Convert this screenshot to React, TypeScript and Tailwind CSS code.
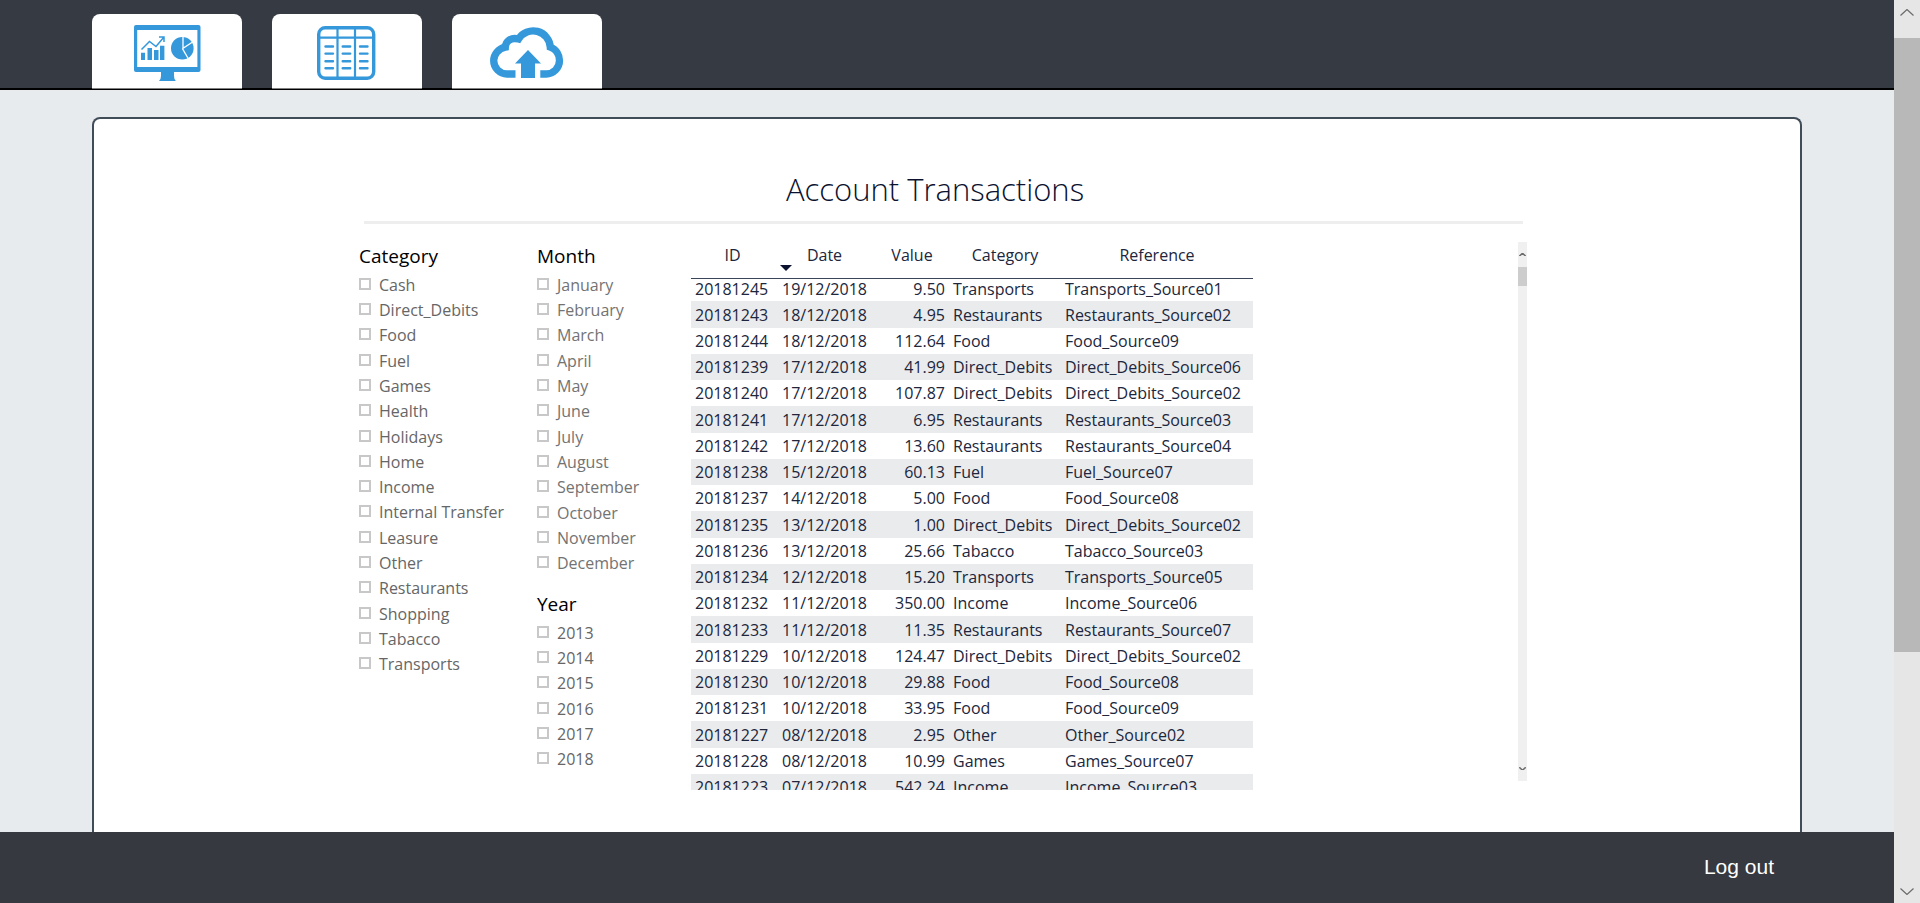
import React from 'react';

const categories = [
    'Cash', 'Direct_Debits', 'Food', 'Fuel', 'Games', 'Health', 'Holidays', 'Home', 'Income',
    'Internal Transfer', 'Leasure', 'Other', 'Restaurants', 'Shopping', 'Tabacco', 'Transports',
];

const months = [
    'January', 'February', 'March', 'April', 'May', 'June', 'July', 'August', 'September',
    'October', 'November', 'December',
];

const years = ['2013', '2014', '2015', '2016', '2017', '2018'];

const transactions = [
    ['20181245', '19/12/2018', '9.50', 'Transports', 'Transports_Source01'],
    ['20181243', '18/12/2018', '4.95', 'Restaurants', 'Restaurants_Source02'],
    ['20181244', '18/12/2018', '112.64', 'Food', 'Food_Source09'],
    ['20181239', '17/12/2018', '41.99', 'Direct_Debits', 'Direct_Debits_Source06'],
    ['20181240', '17/12/2018', '107.87', 'Direct_Debits', 'Direct_Debits_Source02'],
    ['20181241', '17/12/2018', '6.95', 'Restaurants', 'Restaurants_Source03'],
    ['20181242', '17/12/2018', '13.60', 'Restaurants', 'Restaurants_Source04'],
    ['20181238', '15/12/2018', '60.13', 'Fuel', 'Fuel_Source07'],
    ['20181237', '14/12/2018', '5.00', 'Food', 'Food_Source08'],
    ['20181235', '13/12/2018', '1.00', 'Direct_Debits', 'Direct_Debits_Source02'],
    ['20181236', '13/12/2018', '25.66', 'Tabacco', 'Tabacco_Source03'],
    ['20181234', '12/12/2018', '15.20', 'Transports', 'Transports_Source05'],
    ['20181232', '11/12/2018', '350.00', 'Income', 'Income_Source06'],
    ['20181233', '11/12/2018', '11.35', 'Restaurants', 'Restaurants_Source07'],
    ['20181229', '10/12/2018', '124.47', 'Direct_Debits', 'Direct_Debits_Source02'],
    ['20181230', '10/12/2018', '29.88', 'Food', 'Food_Source08'],
    ['20181231', '10/12/2018', '33.95', 'Food', 'Food_Source09'],
    ['20181227', '08/12/2018', '2.95', 'Other', 'Other_Source02'],
    ['20181228', '08/12/2018', '10.99', 'Games', 'Games_Source07'],
    ['20181223', '07/12/2018', '542.24', 'Income', 'Income_Source03'],
];

const DashboardIcon = () => (
    <svg width="67" height="56" viewBox="0 0 67 56" fill="#3498db" aria-hidden="true">
        <path fillRule="evenodd" d="M2 0h62.500a2 2 0 0 1 2 2v43a2 2 0 0 1-2 2H2a2 2 0 0 1-2-2V2a2 2 0 0 1 2-2zM3.200 5v37h60.200V5z" />
        <path d="M27 46h13v5q0 3 1.800 5H25q2-2 2-5z" />
        <path d="M7 27.700h4V35H7zM13.500 23H18v12h-4.500zM20 25h4.500v10H20zM26 20.700h4.400V35H26z" />
        <path d="M7.500 24.500l8-8 6.500 5 8-9.500M25 12h5v5" fill="none" stroke="#3498db" strokeWidth="1.500" />
        <circle cx="48.300" cy="23.300" r="11.300" />
        <path d="M49 11v12.300l10-6.500M48.300 23.300L54.500 34" fill="none" stroke="#fff" strokeWidth="1.300" />
    </svg>
);

const TableIcon = () => (
    <svg width="61" height="54" viewBox="0 0 61 54" fill="none" stroke="#3498db" aria-hidden="true">
        <rect x="1.700" y="1.700" width="55" height="50.600" rx="6.500" strokeWidth="3.400" />
        <path d="M2 11.700h55M20.500 2v50M38 2v50" strokeWidth="2.200" />
        <path
            d="M8.500 20.500h7.500M25.700 20.500h7.500M43 20.500h7.500M8.500 27.600h7.500M25.700 27.600h7.500M43 27.600h7.500M8.500 35.200h7.500M25.700 35.200h7.500M43 35.200h7.500M8.500 42.300h7.500M25.700 42.300h7.500M43 42.300h7.500"
            strokeWidth="2.400"
            strokeLinecap="round"
        />
    </svg>
);

const UploadIcon = () => (
    <svg width="75" height="52" viewBox="0 0 75 52" fill="none" aria-hidden="true">
        <path
            d="M25.500 47H17A13.400 13.400 0 0 1 3.700 33.600C3.700 27.500 8.500 21.500 15.300 20.200C15.500 14.500 20.500 10 28.500 12A17.200 17.200 0 0 1 60.300 20.200C66.500 22.500 69.500 28 69.500 33.600A13.400 13.400 0 0 1 56.200 47H50.300"
            stroke="#3498db"
            strokeWidth="7.300"
        />
        <path d="M38 23l13 13.500h-6V51H31V36.500h-6z" fill="#3498db" />
    </svg>
);

const tabs = [
    { label: 'Dashboard', icon: <DashboardIcon /> },
    { label: 'Transactions', icon: <TableIcon /> },
    { label: 'Upload', icon: <UploadIcon /> },
];

const Chevron = ({ size, down }: { size: number; down?: boolean }) => (
    <svg width={size} height={size / 2} viewBox="0 0 14 7" fill="none" stroke="#6b6b6b" strokeWidth={size > 8 ? 1.2 : 3} aria-hidden="true">
        <path d={down ? 'M.5 .5L7 6.500L13.500 .5' : 'M.5 6.500L7 .5L13.500 6.500'} />
    </svg>
);

const Filter = ({ title, items, listClass }: { title: string; items: string[]; listClass: string }) => (
    <fieldset>
        <legend className="h-7 text-[19px] leading-7 text-black">{title}</legend>
        <div className={`mt-[2px] grid auto-rows-fr text-base ${listClass}`}>
            {items.map(item => (
                <label key={item} className="flex items-center gap-2">
                    <input type="checkbox" className="mb-[2px] size-3 shrink-0 appearance-none border-2 border-[#c8c8c8] bg-white checked:bg-[#666]" />
                    {item}
                </label>
            ))}
        </div>
    </fieldset>
);

const TransactionTable = () => (
    <div className="h-[548px] overflow-hidden">
        <table className="w-[562px] table-fixed border-separate border-spacing-0 text-base leading-5 whitespace-nowrap text-[#20263c]">
            <colgroup>
                <col className="w-[83px]" />
                <col className="w-[101px]" />
                <col className="w-[74px]" />
                <col className="w-[112px]" />
                <col className="w-[192px]" />
            </colgroup>
            <thead>
                <tr className="h-[37px] align-top">
                    {['ID', 'Date', 'Value', 'Category', 'Reference'].map(name => (
                        <th key={name} className="relative border-b border-[#3b4559] p-0 leading-[26px] font-normal">
                            {name}
                            {name === 'Date' && (
                                <svg className="absolute top-[23px] left-[6px]" width="12" height="6" viewBox="0 0 12 6" aria-hidden="true">
                                    <path d="M0 0h12L6 6z" fill="#0b1230" />
                                </svg>
                            )}
                        </th>
                    ))}
                </tr>
            </thead>
            <tbody>
                {transactions.map(([id, date, value, category, reference]) => (
                    <tr key={id} className="h-[26px] first:h-[22px] first:align-top even:bg-[#eaebed] nth-[4n+2]:h-[27px] [&>td]:px-1 [&>td]:py-0">
                        <td>{id}</td>
                        <td className="text-center">{date}</td>
                        <td className="text-right">{value}</td>
                        <td>{category}</td>
                        <td>{reference}</td>
                    </tr>
                ))}
            </tbody>
        </table>
    </div>
);

export default function App() {
    return (
        <div className="flex h-screen overflow-hidden bg-[#e7ebee] font-['Open_Sans','Noto_Sans',sans-serif]">
            <div className="flex min-w-0 flex-1 flex-col">
                <header className="shrink-0 border-b-2 border-black bg-[#363a42] px-[92px] pt-[14px]">
                    <nav className="-mb-px flex gap-[30px]">
                        {tabs.map(({ label, icon }) => (
                            <a key={label} href="#" aria-label={label} className="flex h-[75px] w-[150px] items-center justify-center rounded-t-lg border-b border-[#808080] bg-white pt-1">
                                {icon}
                            </a>
                        ))}
                    </nav>
                </header>

                <main className="flex min-h-0 flex-1 flex-col px-[92px] pt-[27px]">
                    <section className="min-h-0 flex-1 overflow-hidden rounded-t-lg border-2 border-b-0 border-[#414c59] bg-white">
                        <div className="mx-auto max-w-[1176px] pt-[44px]">
                            <h1 className="pr-6 text-center text-[31px] leading-[52px] font-light text-[#0b1230]">Account Transactions</h1>
                            <hr className="mt-[6px] mr-3 ml-[5px] h-[3px] border-0 bg-[#eee]" />

                            <div className="mt-[18px] flex">
                                <div className="w-[178px] shrink-0 text-[#666]">
                                    <Filter title="Category" items={categories} listClass="h-[405px]" />
                                </div>
                                <div className="flex w-[154px] shrink-0 flex-col gap-[14px] text-[#737373]">
                                    <Filter title="Month" items={months} listClass="h-[304px]" />
                                    <Filter title="Year" items={years} listClass="h-[152px] text-[#666]" />
                                </div>
                                <TransactionTable />
                                <div className="mr-2 ml-auto flex h-[539px] w-[9px] shrink-0 flex-col items-center bg-[#f0f0f0]">
                                    <button type="button" aria-label="Scroll up" className="flex h-[25px] w-full items-center justify-center">
                                        <Chevron size={7} />
                                    </button>
                                    <div className="h-[19px] w-full bg-[#cdcdcd]" />
                                    <button type="button" aria-label="Scroll down" className="mt-auto flex h-[25px] w-full items-center justify-center">
                                        <Chevron size={7} down />
                                    </button>
                                </div>
                            </div>
                        </div>
                    </section>
                </main>

                <footer className="flex h-[71px] shrink-0 items-center justify-end bg-[#363940] pr-[120px] pb-[2px]">
                    <a href="#" className="font-['Liberation_Sans',sans-serif] text-[21px] leading-7 text-white">Log out</a>
                </footer>
            </div>

            <div className="flex w-[26px] shrink-0 flex-col bg-[#e6e6e6]">
                <button type="button" aria-label="Page up" className="flex h-[38px] shrink-0 justify-center pt-[9px]">
                    <Chevron size={14} />
                </button>
                <div className="h-[68%] bg-[#b8b8b8]" />
                <button type="button" aria-label="Page down" className="mt-auto flex h-[38px] shrink-0 items-end justify-center pb-2">
                    <Chevron size={14} down />
                </button>
            </div>
        </div>
    );
}
